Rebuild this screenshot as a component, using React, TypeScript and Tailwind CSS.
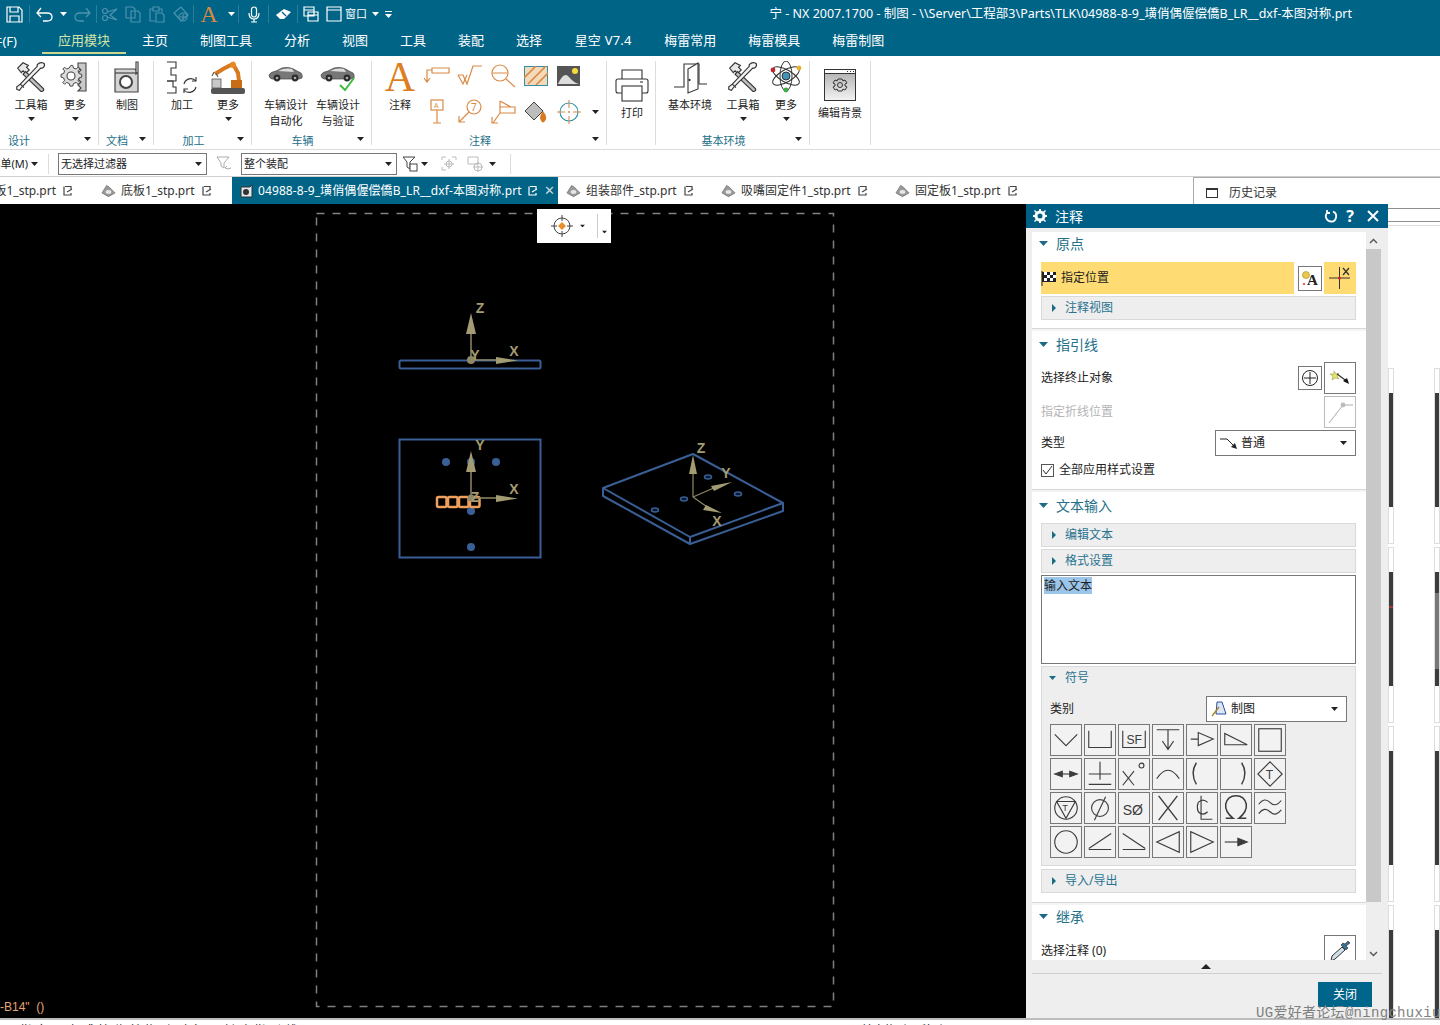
import React from "react";

const Caret = ({ className = "" }: { className?: string }) => (
  <svg width="7" height="4" viewBox="0 0 7 4" className={`shrink-0 ${className}`}>
    <path d="M0 0H7L3.5 4Z" fill="currentColor" />
  </svg>
);

/* ---------- ribbon drawings ---------- */
const ToolsIcon = ({ size = 32 }: { size?: number }) => (
  <svg width={size} height={size} viewBox="0 0 36 36" fill="none" stroke="#333" strokeWidth="1.3">
    <path d="M3 8 9 2l6 3-2 2 3 3-4 4-3-3-2 2Z" fill="#e8e8e8" />
    <path d="m12 12 20 19q1 2-1 3t-3-1L9 15Z" fill="#bdbdbd" />
    <path d="M33 3q1 3-2 5l-2 0L8 29l-3 4-3-1 0-3 4-3L25 6l0-2q3-3 6-2Z" fill="#f2f2f2" />
    <path d="m6 26 4 4" />
  </svg>
);

const GearPanelIcon = () => (
  <svg width="30" height="32" viewBox="0 0 30 32" fill="none" stroke="#444" strokeWidth="1.1">
    <path d="M18 2h8v28h-8l3-3-3-3 3-3-3-3 3-3-3-3 3-3-3-3Z" fill="#c9c9c9" />
    <path
      d="M11 6l2 0 1 3 3 1 2-2 2 2-2 2 1 3 3 1v3l-3 1-1 3 2 2-2 2-2-2-3 1-1 3h-3l-1-3-3-1-2 2-2-2 2-2-1-3-3-1v-3l3-1 1-3-2-2 2-2 2 2 3-1Z"
      fill="#dcdcdc"
      transform="translate(1 -1) scale(.9)"
    />
    <circle cx="11" cy="15" r="4" fill="#fff" />
  </svg>
);

const DraftIcon = () => (
  <svg width="30" height="34" viewBox="0 0 30 34" fill="none" stroke="#444" strokeWidth="1.2">
    <path d="M3 8h20l3 4v19H3Z" fill="#d4d4d4" />
    <circle cx="14" cy="21" r="6" fill="#fff" strokeWidth="2" />
    <path d="M3 12h22" />
    <path d="M24 1l2 0 0 10-2 2Z" fill="#fff" />
  </svg>
);

const MachiningIcon = () => (
  <svg width="34" height="34" viewBox="0 0 34 34" fill="none" stroke="#333" strokeWidth="1.1">
    <path d="M2 1h9v6H6v7h5v6H2" />
    <path d="M2 20h6v6h3v6H2" />
    <path d="M19 23a7 7 0 0 1 12-3M31 26a7 7 0 0 1-12 3" />
    <path d="m31 16 0 4-4 0M19 32l0-4 4 0" />
  </svg>
);

const RobotIcon = () => (
  <svg width="34" height="34" viewBox="0 0 34 34">
    <rect x="1" y="18" width="9" height="9" fill="#c8c8c8" stroke="#555" strokeWidth=".8" />
    <rect x="0" y="27" width="34" height="6" rx="2" fill="#555" />
    <path d="M4 13 12 8l10-5 5 9 1 8" fill="none" stroke="#d97a1e" strokeWidth="4" />
    <rect x="20" y="19" width="11" height="8" fill="#c96d14" />
    <circle cx="22" cy="4" r="3" fill="#e88a22" />
    <path d="M3 11 1 15M5 12l2 4" stroke="#666" strokeWidth="1.2" />
  </svg>
);

const CarIcon = ({ check = false }: { check?: boolean }) => (
  <svg width="36" height="32" viewBox="0 0 36 32" className="mt-[2px]">
    <path d="M1 12q1-3 7-4l6-3q8-2 15 3l4 2q2 2 1 5l-3 1H4q-3-1-3-4Z" fill="#777" stroke="#444" strokeWidth=".7" />
    <path d="M10 8l5-2q5-1 9 0l2 3Z" fill="#ddd" />
    <circle cx="9" cy="15" r="3.4" fill="#2c2c2c" />
    <circle cx="27" cy="15" r="3.4" fill="#2c2c2c" />
    <circle cx="9" cy="15" r="1.3" fill="#aaa" />
    <circle cx="27" cy="15" r="1.3" fill="#aaa" />
    {check && <path d="m20 22 5 5 9-12" fill="none" stroke="#3fbb3f" strokeWidth="2" />}
  </svg>
);

const Orange = ({ children, w = 30 }: { children: React.ReactNode; w?: number }) => (
  <svg width={w} height="26" viewBox={`0 0 ${w} 26`} fill="none" stroke="#d98a45" strokeWidth="1.2">
    {children}
  </svg>
);

const PrinterIcon = () => (
  <svg width="34" height="34" viewBox="0 0 34 34" fill="none" stroke="#333" strokeWidth="1.1">
    <path d="M7 11V2h20v9" />
    <path d="M7 25H3q-2 0-2-2V13q0-2 2-2h28q2 0 2 2v10q0 2-2 2h-4" />
    <rect x="7" y="18" width="20" height="15" fill="#fff" />
    <path d="M25 14h3" />
  </svg>
);

const DoorIcon = () => (
  <svg width="34" height="34" viewBox="0 0 34 34" fill="none" stroke="#333" strokeWidth="1.1">
    <path d="M1 26h10V3h15v20h8" />
    <path d="M15 32V8L25 2v26Z" fill="#fff" />
    <circle cx="16.5" cy="19" r=".6" fill="#333" />
  </svg>
);

const AtomIcon = () => (
  <svg width="32" height="32" viewBox="0 0 32 32" fill="none" stroke="#333" strokeWidth="1">
    <ellipse cx="16" cy="15" rx="15" ry="6" transform="rotate(30 16 15)" />
    <ellipse cx="16" cy="15" rx="15" ry="6" transform="rotate(-30 16 15)" />
    <ellipse cx="16" cy="15" rx="6" ry="15" />
    <circle cx="16" cy="15" r="4" fill="#3d93b8" />
    <circle cx="3" cy="9" r="2.4" fill="#c0272d" stroke="none" />
    <circle cx="29" cy="7" r="2.4" fill="#eab12e" stroke="none" />
    <circle cx="16" cy="29" r="2.4" fill="#3fae49" stroke="none" />
  </svg>
);

const BackgroundIcon = () => (
  <svg width="34" height="34" viewBox="0 0 34 34" fill="none" stroke="#333" strokeWidth="1">
    <defs>
      <linearGradient id="bgfill" x1="0" y1="0" x2="0" y2="1">
        <stop offset="0" stopColor="#b5b5b5" />
        <stop offset="1" stopColor="#f4f4f4" />
      </linearGradient>
    </defs>
    <rect x="1.5" y="1.5" width="31" height="31" fill="#fff" />
    <rect x="1.5" y="5.5" width="31" height="27" fill="url(#bgfill)" />
    <path d="M24 3.5h1M27 3.5h1M30 3.5h1" />
    <path d="M15 11h4l1 2 2-1 2 3-2 1v2l2 1-2 3-2-1-1 2h-4l-1-2-2 1-2-3 2-1v-2l-2-1 2-3 2 1Z" />
    <circle cx="17" cy="17" r="2.5" />
  </svg>
);

/* ---------- ribbon parts ---------- */
const Tool = ({
  icon,
  label,
  label2,
  drop,
  w,
  low,
}: {
  icon: React.ReactNode;
  label: string;
  label2?: string;
  drop?: boolean;
  w: number;
  low?: boolean;
}) => (
  <div className="flex flex-col items-center shrink-0" style={{ width: w }}>
    <div className={`flex items-start justify-center ${low ? "h-[44px] pt-[7px]" : "h-[36px]"}`}>{icon}</div>
    <span className="text-[11px] leading-[16px] text-[#222] whitespace-nowrap">{label}</span>
    {label2 && <span className="text-[11px] leading-[16px] text-[#222] whitespace-nowrap">{label2}</span>}
    {drop && <Caret className="mt-[4px] text-[#222]" />}
  </div>
);

const Group = ({
  w,
  label,
  more,
  labelClass = "mr-[11px]",
  children,
}: {
  w: number;
  label?: string;
  more?: boolean;
  labelClass?: string;
  children: React.ReactNode;
}) => (
  <div className="shrink-0 h-[84px] mt-[5px] border-r border-[#dcdcdc] flex flex-col" style={{ width: w }}>
    <div className="flex h-[71px]">{children}</div>
    <div className="mt-auto h-[13px] grid grid-cols-[1fr_auto_1fr] items-center pr-[7px]">
      <span />
      <span className={`text-[11px] leading-[13px] text-[#1c6f88] translate-y-[2px] ${labelClass}`}>{label}</span>
      {more ? <Caret className="justify-self-end text-[#222]" /> : <span />}
    </div>
  </div>
);

/* ---------- dialog parts ---------- */
const SectionHead = ({ label, h = "h-[28px]" }: { label: string; h?: string }) => (
  <div className={`flex items-center gap-[8px] pl-[7px] pb-[2px] ${h}`}>
    <svg width="9" height="5" viewBox="0 0 9 5">
      <path d="M0 0H9L4.5 5Z" fill="#1b6a86" />
    </svg>
    <span className="text-[14px] text-[#24708a]">{label}</span>
  </div>
);

const Fold = ({ label, className = "" }: { label: string; className?: string }) => (
  <div
    className={`h-[24px] ml-[9px] mr-[10px] bg-[#eeeeee] border border-[#d9d9d9] flex items-center pl-[10px] gap-[9px] ${className}`}
  >
    <svg width="4" height="8" viewBox="0 0 4 8">
      <path d="M0 0V8L4 4Z" fill="#1b6a86" />
    </svg>
    <span className="text-[12px] text-[#2a7390]">{label}</span>
  </div>
);

const Divider = ({ className = "" }: { className?: string }) => (
  <div className={`h-[3px] border-t border-[#d8d8d8] bg-[#f4f4f4] ${className}`} />
);

const sym = "#3c3c3c";
const symbols: React.ReactNode[] = [
  <path d="M4 10 16 22 28 10" />,
  <path d="M4 6V24H28V6" />,
  <>
    <path d="M4 6V24H28V6" />
    <text x="8" y="20" fontSize="13" fill={sym} stroke="none" fontFamily="Liberation Sans">SF</text>
  </>,
  <path d="M4 5H28M16 5V26M10 17 16 26 22 17" />,
  <path d="M4 15H12M12 8V22L28 15Z" />,
  <path d="M4 9V21H28Z" />,
  <rect x="4" y="4" width="24" height="24" />,
  <>
    <path d="M12 16H20" />
    <path d="M4 16 12 13V19ZM28 16 20 13V19Z" fill={sym} />
  </>,
  <path d="M16 3V22M4 16H28M4 27H28" />,
  <>
    <path d="M4 13 16 28M16 13 4 28" />
    <circle cx="24" cy="7" r="2.6" />
  </>,
  <path d="M4 21Q16 3 28 21" />,
  <path d="M10 4Q3 15 10 27" strokeWidth="1.5" />,
  <path d="M22 4Q29 15 22 27" strokeWidth="1.5" />,
  <>
    <path d="M16 3 29 16 16 29 3 16Z" />
    <text x="11.500" y="21" fontSize="13" fill={sym} stroke="none" fontFamily="Liberation Sans">T</text>
  </>,
  <>
    <circle cx="16" cy="16" r="12" />
    <path d="M6 9H26L16 27Z" />
    <text x="12" y="19" fontSize="10" fill={sym} stroke="none" fontFamily="Liberation Sans">T</text>
  </>,
  <>
    <circle cx="16" cy="16" r="9" />
    <path d="M22 4 10 29" />
  </>,
  <text x="4" y="23" fontSize="15" fill={sym} stroke="none" fontFamily="Liberation Sans">SØ</text>,
  <path d="M6 3 26 29M26 3 6 29" strokeWidth="1.5" />,
  <>
    <path d="M22 10Q17 5 12 10 10 15 12 20 17 25 22 20" />
    <path d="M15 3V28H27" />
  </>,
  <path d="M5 27H13Q4 20 5 12 7 3 16 3 25 3 27 12 28 20 19 27H27" strokeWidth="1.6" />,
  <path d="M4 12Q10 4 16 10T28 8M4 22Q10 14 16 20T28 18" />,
  <circle cx="16" cy="16" r="12" />,
  <path d="M4 23 28 7M4 24H28" />,
  <path d="M4 7 28 23M4 24H28" />,
  <path d="M28 5V27L4 16Z" />,
  <path d="M4 5V27L28 16Z" />,
  <>
    <path d="M4 16H18" />
    <path d="M18 12 28 16 18 20Z" fill={sym} />
  </>,
];

const PlainBtn = ({ children, className = "" }: { children: React.ReactNode; className?: string }) => (
  <div className={`shrink-0 flex items-center justify-center border border-[#777] bg-white ${className}`}>{children}</div>
);

const NoteIcon = ({ dark = false }: { dark?: boolean }) => (
  <svg width="10" height="11" viewBox="0 0 10 11" fill="none" stroke={dark ? "#fff" : "#444"} strokeWidth="1.2" className="shrink-0">
    <path d="M2 1.500H8V4M8 8V10H1V1.500" />
    <path d="M4 7 9 4" />
  </svg>
);

const PartIcon = () => (
  <svg width="15" height="14" viewBox="0 0 16 14" className="shrink-0">
    <path d="M1 9 6 1 9 3 15 9 8 13Z" fill="#9a9a9a" stroke="#666" strokeWidth=".7" />
    <ellipse cx="8" cy="8" rx="3" ry="2" fill="#e8e8e8" />
  </svg>
);

const Tab = ({ label, className = "" }: { label: string; className?: string }) => (
  <div className={`flex items-center shrink-0 text-[12px] text-[#333] whitespace-nowrap ${className}`}>
    <PartIcon />
    <span className="ml-[5px] mr-[7px] shrink-0">{label}</span>
    <NoteIcon />
  </div>
);

const QuickSep = () => <div className="w-px h-[18px] bg-[#2d7d9b] shrink-0" />;

const Q = ({ w, children }: { w: number; children?: React.ReactNode }) => (
  <div className="flex items-center justify-center shrink-0 h-full text-white" style={{ width: w }}>
    {children}
  </div>
);

const faded = "#4d92ad";

const ThumbCard = ({ children }: { children?: React.ReactNode }) => (
  <div className="h-[176px] border border-[#dddddd] pt-[24px]">
    <div className="h-[114px] bg-[#3c3c3c] overflow-hidden">{children}</div>
  </div>
);

const AxisLabel = ({ x, y, t }: { x: number; y: number; t: string }) => (
  <text x={x} y={y} fontSize="14" fontWeight="bold" fill="#a39b72" fontFamily="Liberation Sans" textAnchor="middle">
    {t}
  </text>
);

const cone = "#a39b72";

export default function App() {
  return (
    <div className="w-[1440px] h-[1025px] overflow-hidden relative flex flex-col bg-white font-['Noto_Sans','Noto_Sans_CJK_SC',sans-serif]">
      {/* Title bar */}
      <div className="h-[28px] bg-[#006487] flex items-center text-white shrink-0">
        <Q w={29}>
          <svg width="17" height="17" viewBox="0 0 17 17" fill="none" stroke="#fff" strokeWidth="1.2">
            <path d="M1 1H13L16 4V16H1Z" />
            <path d="M4 1V6H12V1M4 16V10H13V16" />
          </svg>
        </Q>
        <QuickSep />
        <Q w={28}>
          <svg width="17" height="15" viewBox="0 0 17 15" fill="none" stroke="#fff" strokeWidth="1.3">
            <path d="M1 6H11Q16 6 16 10T11 14H7M5 1 1 6 5 10" />
          </svg>
        </Q>
        <Q w={10}><Caret /></Q>
        <Q w={28}>
          <svg width="17" height="15" viewBox="0 0 17 15" fill="none" stroke={faded} strokeWidth="1.3">
            <path d="M16 6H6Q1 6 1 10T6 14H10M12 1 16 6 12 10" />
          </svg>
        </Q>
        <QuickSep />
        <Q w={24}>
          <svg width="17" height="15" viewBox="0 0 17 15" fill="none" stroke={faded} strokeWidth="1.2">
            <circle cx="4" cy="4" r="2.500" />
            <circle cx="4" cy="11" r="2.500" />
            <path d="M6 5 16 2 9 8 16 13 6 10" />
          </svg>
        </Q>
        <Q w={24}>
          <svg width="16" height="17" viewBox="0 0 16 17" fill="none" stroke={faded} strokeWidth="1.2">
            <path d="M1 1H8L10 3V12H1Z" />
            <path d="M6 5H13L15 7V16H6Z" />
          </svg>
        </Q>
        <Q w={24}>
          <svg width="16" height="17" viewBox="0 0 16 17" fill="none" stroke={faded} strokeWidth="1.2">
            <path d="M4 3H1V15H6M10 3H13V6M4 1H10V5H4ZM7 7H13L15 9V16H7Z" />
          </svg>
        </Q>
        <Q w={24}>
          <svg width="17" height="17" viewBox="0 0 17 17" fill="none" stroke={faded} strokeWidth="1.2">
            <path d="M8 1 1 7 8 15 15 9Z" />
            <circle cx="10" cy="11" r="4" />
            <path d="M10 8V14M7 11H13" />
          </svg>
        </Q>
        <QuickSep />
        <Q w={30}>
          <span className="text-[24px] leading-none font-['Liberation_Serif',serif] text-[#d98a3d]">A</span>
        </Q>
        <Q w={14}><Caret /></Q>
        <QuickSep />
        <Q w={29}>
          <svg width="12" height="17" viewBox="0 0 12 17" fill="none" stroke="#fff" strokeWidth="1.2">
            <rect x="3.500" y="1" width="5" height="10" rx="2.500" />
            <path d="M1 7Q1 13 6 13T11 7M6 13V16M3 16H9" />
          </svg>
        </Q>
        <QuickSep />
        <Q w={28}>
          <svg width="17" height="12" viewBox="0 0 17 12" fill="#fff">
            <path d="M1 7 9 1 16 4 9 11 5 11Z" />
            <path d="M7 4 11 8" stroke="#006487" strokeWidth="1.2" />
          </svg>
        </Q>
        <QuickSep />
        <Q w={26}>
          <svg width="16" height="16" viewBox="0 0 16 16" fill="none" stroke="#fff" strokeWidth="1.2">
            <path d="M1 1H11V10H1ZM1 4H11M5 6H15V15H5ZM5 9H15" />
          </svg>
        </Q>
        <Q w={20}>
          <svg width="16" height="16" viewBox="0 0 16 16" fill="none" stroke="#fff" strokeWidth="1.2">
            <path d="M1 1H15V15H1ZM1 4H15" />
          </svg>
        </Q>
        <Q w={24}><span className="text-[11px]">窗口</span></Q>
        <Q w={14}><Caret /></Q>
        <Q w={12}>
          <svg width="7" height="7" viewBox="0 0 7 7" fill="#fff">
            <path d="M0 0H7V1H0ZM0 3H7L3.500 7Z" />
          </svg>
        </Q>
        <div className="flex-1 text-right pr-[88px] text-[12.5px] whitespace-nowrap overflow-hidden">
          宁 - NX 2007.1700 - 制图 - \\Server\工程部3\Parts\TLK\04988-8-9_墴俏偶偓偿僑B_LR__dxf-本图对称.prt
        </div>
      </div>

      {/* Menu tabs */}
      <div className="h-[28px] bg-[#006487] flex text-[13px] text-white shrink-0">
        <div className="w-[17px] mr-[25px] flex justify-end items-center overflow-hidden whitespace-nowrap">件(F)</div>
        <div className="px-[16px] pt-[2px] flex items-center text-[#d4e3a6] border-b-2 border-[#cbd68e] h-[26px]">应用模块</div>
        {["主页", "制图工具", "分析", "视图", "工具", "装配", "选择"].map((m) => (
          <div key={m} className="px-[16px] flex items-center h-[26px] whitespace-nowrap">
            {m}
          </div>
        ))}
        <div className="w-[90px] flex justify-center items-center h-[26px] whitespace-nowrap tracking-[0.2px]">星空 V7.4</div>
        {["梅雷常用", "梅雷模具", "梅雷制图"].map((m) => (
          <div key={m} className="px-[16px] flex items-center h-[26px] whitespace-nowrap">
            {m}
          </div>
        ))}
      </div>

      {/* Ribbon */}
      <div className="h-[94px] shrink-0 border-b border-[#dcdcdc] flex">
        <Group w={99} label="设计" more labelClass="mr-[53px]">
          <Tool w={62} icon={<ToolsIcon />} label="工具箱" drop />
          <Tool w={26} icon={<GearPanelIcon />} label="更多" drop />
        </Group>
        <Group w={55} label="文档" more>
          <div className="pl-[11px] flex">
            <Tool w={34} icon={<DraftIcon />} label="制图" />
          </div>
        </Group>
        <Group w={98} label="加工" more>
          <div className="pl-[11px] flex gap-[12px]">
            <Tool w={34} icon={<MachiningIcon />} label="加工" />
            <Tool w={34} icon={<RobotIcon />} label="更多" drop />
          </div>
        </Group>
        <Group w={120} label="车辆" more>
          <div className="pl-[12px] flex gap-[8px]">
            <Tool w={44} icon={<CarIcon />} label="车辆设计" label2="自动化" />
            <Tool w={44} icon={<CarIcon check />} label="车辆设计" label2="与验证" />
          </div>
        </Group>
        <Group w={235} label="注释" more>
          <div className="pl-[11px] flex">
            <Tool
              w={34}
              icon={
                <svg width="32" height="32" viewBox="0 0 32 32">
                  <text x="16" y="30" fontSize="42" textAnchor="middle" fill="#dd7e1f" fontFamily="Liberation Serif">A</text>
                </svg>
              }
              label="注释"
            />
            <div className="ml-[3px] -mt-[3px] h-[72px] grid grid-cols-[33px_33px_33px_33px_33px_20px] grid-rows-[36px_36px] items-center justify-items-center">
              <Orange>
                <path d="M10 5H27V10H10ZM10 7H5V19M2 15 5 19 8 15" />
              </Orange>
              <Orange>
                <path d="M3 12H8L12 21 18 3H27" />
                <path d="M3 12 8 21 12 12" />
              </Orange>
              <Orange>
                <circle cx="12" cy="10" r="8" />
                <path d="M5 10H19M18 16 27 24" />
              </Orange>
              <svg width="24" height="20" viewBox="0 0 24 20">
                <rect x=".5" y=".5" width="23" height="19" fill="#f5d9b8" stroke="#2f8fa8" />
                <path d="M0 12 12 0M4 18 22 0M12 19 24 7" stroke="#d98a45" strokeWidth="1.6" />
              </svg>
              <svg width="23" height="20" viewBox="0 0 23 20">
                <rect width="23" height="20" fill="#555" />
                <path d="M1 18Q7 5 12 11T22 18Z" fill="#ddd" />
                <circle cx="18" cy="5" r="3" fill="#f4dc3a" />
              </svg>
              <span />
              <Orange w={20}>
                <rect x="4" y="1" width="12" height="10" />
                <path d="M10 11V24M6 24H14" />
                <text x="7" y="9" fontSize="7" stroke="none" fill="#d98a45">A</text>
              </Orange>
              <Orange>
                <circle cx="19" cy="8" r="7" />
                <text x="16" y="12" fontSize="10" stroke="none" fill="#d98a45">7</text>
                <path d="M14 13 4 23M4 17V23H10" />
              </Orange>
              <Orange>
                <path d="M12 2V14M12 2 23 8 12 8M12 8H27V14H12ZM12 14 5 24M4 18 4 24 10 24" />
              </Orange>
              <svg width="26" height="24" viewBox="0 0 26 24">
                <path d="M2 11 11 2 20 11 11 20Z" fill="#bdbdbd" stroke="#444" />
                <path d="M20 11Q25 17 22 21T17 18Q17 15 20 11Z" fill="#d97a1e" />
              </svg>
              <svg width="24" height="24" viewBox="0 0 24 24" fill="none" stroke="#2f8fa8" strokeWidth="1.1">
                <circle cx="12" cy="12" r="9" />
                <path d="M12 0V8M12 16V24M0 12H8M16 12H24" stroke="#d98a45" />
                <circle cx="12" cy="12" r="1" fill="#d98a45" stroke="none" />
              </svg>
              <Caret className="text-[#222]" />
            </div>
          </div>
        </Group>
        <Group w={49}>
          <div className="pl-[8px]">
            <Tool w={34} low icon={<PrinterIcon />} label="打印" />
          </div>
        </Group>
        <Group w={154} label="基本环境" more>
          <div className="pl-[12px] flex">
            <Tool w={44} icon={<DoorIcon />} label="基本环境" />
            <div className="ml-[15px]">
              <Tool w={32} icon={<ToolsIcon />} label="工具箱" drop />
            </div>
            <div className="ml-[10px]">
              <Tool w={34} icon={<AtomIcon />} label="更多" drop />
            </div>
          </div>
        </Group>
        <Group w={61}>
          <Tool w={60} low icon={<BackgroundIcon />} label="编辑背景" />
        </Group>
      </div>

      {/* Selection bar */}
      <div className="h-[27px] shrink-0 border-b border-[#cfcfcf] pt-[2px] flex items-center text-[11px] text-[#222]">
        <div className="w-[28px] flex justify-end overflow-hidden whitespace-nowrap">菜单(M)</div>
        <Caret className="ml-[3px] text-[#222]" />
        <div className="w-px h-[20px] bg-[#dcdcdc] ml-[10px]" />
        <div className="ml-[9px] w-[149px] h-[22px] border border-[#777] flex items-center justify-between pl-[2px] pr-[4px]">
          无选择过滤器
          <Caret className="text-[#222]" />
        </div>
        <div className="w-[34px] flex justify-center">
          <svg width="16" height="16" viewBox="0 0 16 16" fill="none" stroke="#aaa" strokeWidth="1">
            <path d="M1 1H13L8 7V12L5 10V7ZM9 12Q12 14 15 12M9 12 11 10" />
          </svg>
        </div>
        <div className="w-[156px] h-[22px] border border-[#777] flex items-center justify-between pl-[2px] pr-[4px]">
          整个装配
          <Caret className="text-[#222]" />
        </div>
        <div className="w-[32px] ml-[2px] flex items-center justify-center gap-[3px]">
          <svg width="16" height="16" viewBox="0 0 16 16" fill="none" stroke="#444" strokeWidth="1">
            <path d="M1 1H13L8 6V13L5 11V6Z" />
            <rect x="8" y="8" width="7" height="7" fill="#fff" />
          </svg>
          <Caret className="text-[#222]" />
        </div>
        <div className="w-[24px] ml-[6px] flex justify-center">
          <svg width="16" height="16" viewBox="0 0 16 16" fill="none" stroke="#bbb">
            <path d="M1 4V1H5M11 1H15V4M1 11V14H5" />
            <circle cx="8" cy="8" r="3" />
            <path d="M8 3V13M3 8H13" />
          </svg>
        </div>
        <div className="w-[24px] ml-[2px] flex justify-center">
          <svg width="16" height="16" viewBox="0 0 16 16" fill="none" stroke="#bbb">
            <path d="M1 1H11V8H1Z" />
            <circle cx="11" cy="11" r="4" />
            <path d="M11 6V16M6 11H16" />
          </svg>
        </div>
        <Caret className="ml-[2px] text-[#222]" />
        <div className="w-px h-[20px] bg-[#dcdcdc] ml-[14px]" />
      </div>

      {/* File tabs */}
      <div className="h-[27px] shrink-0 flex">
        <Tab label="固定板1_stp.prt" className="w-[73px] justify-end" />
        <div className="w-[28px] shrink-0" />
        <Tab label="底板1_stp.prt" className="w-[110px]" />
        <div className="w-[21px] shrink-0" />
        <div className="w-[326px] shrink-0 bg-[#006487] flex items-center pl-[8px] text-[12px] text-white whitespace-nowrap">
          <svg width="13" height="14" viewBox="0 0 13 14" className="mr-[5px] shrink-0">
            <path d="M1 3H10L12 1V13H1Z" fill="#dfe8ec" stroke="#333" />
            <circle cx="6" cy="8" r="3" fill="#333" />
          </svg>
          <span className="tracking-[0.1px]">04988-8-9_墴俏偶偓偿僑B_LR__dxf-本图对称.prt</span>
          <span className="ml-[6px]"><NoteIcon dark /></span>
          <span className="ml-[6px] text-[#c9d7de] text-[13px] leading-none">✕</span>
        </div>
        <Tab label="组装部件_stp.prt" className="ml-[8px] w-[155px]" />
        <Tab label="吸嘴固定件1_stp.prt" className="w-[174px]" />
        <Tab label="固定板1_stp.prt" className="w-[298px]" />
        <div className="flex-1 border-l border-t border-[#aaaaaa] flex items-center pt-[3px] text-[12px] text-[#333]">
          <span className="w-[10px]" />
          <span className="ml-[2px] w-[12px] h-[10px] border border-[#333] border-t-2" />
          <span className="ml-[11px]">历史记录</span>
        </div>
      </div>

      {/* Work area */}
      <div className="flex-1 flex min-h-0">
        {/* Drawing canvas */}
        <div className="w-[1026px] shrink-0 bg-black relative">
          <svg width="1026" height="814" viewBox="0 204 1026 814" className="block">
            <rect x="316.5" y="213.5" width="517" height="793" fill="none" stroke="#808080" strokeWidth="1.5" strokeDasharray="8 8" />

            {/* front view */}
            <rect x="399.5" y="360.5" width="141" height="8" rx="1.5" fill="none" stroke="#3a5f96" strokeWidth="2" />
            <path d="M471 360V330M471 360H498" stroke="#8f8866" strokeWidth="1.5" />
            <path d="M471 313 466 334H476ZM518 360.5 496 357V364Z" fill={cone} />
            <circle cx="471" cy="360" r="4" fill="#8f8866" />
            <AxisLabel x={480} y={313} t="Z" />
            <AxisLabel x={514} y={356} t="X" />
            <AxisLabel x={475} y={360} t="Y" />

            {/* top view */}
            <rect x="399.5" y="439.5" width="141" height="118" fill="none" stroke="#3a5f96" strokeWidth="2" />
            {[
              [446, 462],
              [471, 462],
              [496, 462],
              [471, 511],
              [471, 547],
            ].map(([cx, cy]) => (
              <circle key={`${cx}-${cy}`} cx={cx} cy={cy} r="4" fill="#3a5f96" />
            ))}
            {[437, 448, 459, 470].map((x) => (
              <rect key={x} x={x} y="497" width="9.5" height="10" rx="1.5" fill="none" stroke="#ee9f5d" strokeWidth="2.5" />
            ))}
            <path d="M471 498V470M471 498H498" stroke="#8f8866" strokeWidth="1.5" />
            <path d="M471 451 466 472H476ZM518 498.5 496 495V502Z" fill={cone} />
            <circle cx="471" cy="498" r="3.5" fill="#8f8866" />
            <AxisLabel x={480} y={450} t="Y" />
            <AxisLabel x={514} y={494} t="X" />
            <AxisLabel x={475} y={502} t="Z" />

            {/* iso view */}
            <path
              d="M603 488 693 454 783 503 690 537ZM603 488V496L690 544 783 511V503M690 537V544"
              fill="none"
              stroke="#3a5f96"
              strokeWidth="2"
              strokeLinejoin="round"
            />
            {[
              [655, 510],
              [684, 499],
              [708, 477],
              [738, 494],
            ].map(([cx, cy]) => (
              <ellipse key={cx} cx={cx} cy={cy} rx="3.5" ry="2" fill="#0a1a33" stroke="#3a5f96" strokeWidth="1.5" />
            ))}
            <path d="M693 497V474M693 497 716 487M693 497 710 509" stroke="#8f8866" strokeWidth="1.2" />
            <path d="M693 455 689 474H697ZM732 482 711 486 714 491ZM722 513 706 505 703 510Z" fill={cone} />
            <AxisLabel x={701} y={453} t="Z" />
            <AxisLabel x={726} y={478} t="Y" />
            <AxisLabel x={717} y={526} t="X" />

            <text x="0" y="1011" fontSize="12" fill="#e6a574" fontFamily="Liberation Sans" xmlSpace="preserve">-B14"  ()</text>
          </svg>

          {/* Floating snap toolbar */}
          <div className="absolute left-[537px] top-[5px] w-[74px] h-[34px] bg-white flex items-center text-[#222]">
            <svg width="24" height="24" viewBox="0 0 24 24" fill="none" stroke="#444" className="ml-[13px]">
              <circle cx="12" cy="12" r="8" />
              <path d="M12 1V7M12 17V23M1 12H7M17 12H23" />
              <path d="M12 8 16 12 12 16 8 12Z" fill="#e98f2e" stroke="none" />
            </svg>
            <Caret className="ml-[5px] scale-75" />
            <div className="w-px h-[24px] bg-[#cccccc] ml-[11px]" />
            <Caret className="ml-[3px] mt-[12px] scale-75" />
          </div>
        </div>

        {/* Note dialog */}
        <div className="w-[362px] shrink-0 bg-[#eeeeee] flex flex-col">
          <div className="h-[24px] bg-[#005f87] flex items-center pl-[7px] pr-[9px] text-white">
            <svg width="14" height="14" viewBox="0 0 14 14">
              <circle cx="7" cy="7" r="4" fill="none" stroke="#fff" strokeWidth="3" />
              <path d="M6 0H8V3H6ZM6 11H8V14H6ZM0 6H3V8H0ZM11 6H14V8H11ZM2 1 4 3 3 4 1 2ZM12 1 13 2 11 4 10 3ZM2 13 1 12 3 10 4 11ZM12 13 10 11 11 10 13 12Z" fill="#fff" />
            </svg>
            <span className="ml-[8px] text-[14px]">注释</span>
            <svg width="14" height="14" viewBox="0 0 14 14" fill="none" stroke="#fff" strokeWidth="1.8" className="ml-auto">
              <path d="M4 3Q1 5 2 8.5T7 12.5 12 8.5 9 2.5M3 1V4H6" />
            </svg>
            <span className="ml-[8px] text-[16px] font-bold leading-none">?</span>
            <svg width="12" height="12" viewBox="0 0 12 12" stroke="#fff" strokeWidth="2" className="ml-[13px]">
              <path d="M1 1 11 11M11 1 1 11" />
            </svg>
          </div>

          <div className="h-[732px] flex pl-[6px] pt-[4px]">
            <div className="w-[334px] h-[728px] bg-white overflow-hidden text-[12px] text-[#222]">
              <SectionHead label="原点" h="h-[24px]" />
              <div className="mt-[6px] ml-[9px] flex h-[32px] items-center">
                <div className="w-[253px] h-full bg-[#ffdc73] flex items-center">
                  <svg width="15" height="16" viewBox="0 0 15 16">
                    <path d="M1 1V16" stroke="#222" />
                    <rect x="1" y="2" width="14" height="10" fill="#222" />
                    <path d="M3 2H6V5H3ZM9 2H12V5H9ZM6 5H9V8H6ZM12 5H15V8H12ZM3 8H6V11H3ZM9 8H12V11H9Z" fill="#fff" />
                  </svg>
                  <span className="ml-[5px]">指定位置</span>
                </div>
                <PlainBtn className="ml-[4px] w-[24px] h-[25px]">
                  <svg width="18" height="18" viewBox="0 0 18 18">
                    <circle cx="5" cy="6" r="3.500" fill="#e9c84e" stroke="#a58a20" strokeWidth=".6" />
                    <circle cx="3" cy="15" r="1" fill="#d22" />
                    <text x="6" y="16" fontSize="15" fontWeight="bold" fontFamily="Liberation Serif" fill="#222">A</text>
                  </svg>
                </PlainBtn>
                <div className="ml-[2px] w-[32px] h-full bg-[#ffdc73] flex items-center justify-center">
                  <svg width="24" height="24" viewBox="0 0 24 24" stroke="#333" fill="none">
                    <path d="M11.500 1V23M1 12H22" />
                    <circle cx="11.500" cy="12" r="1.500" fill="#d22" stroke="none" />
                    <path d="M15 2 21 9M21 2 15 9" strokeWidth="1.3" />
                  </svg>
                </div>
              </div>
              <Fold label="注释视图" className="mt-[2px]" />
              <Divider className="mt-[8px]" />

              <SectionHead label="指引线" />
              <div className="mt-[3px] ml-[9px] flex h-[32px] items-center">
                <span className="w-[257px]">选择终止对象</span>
                <PlainBtn className="w-[24px] h-[24px]">
                  <svg width="18" height="18" viewBox="0 0 18 18" fill="none" stroke="#222">
                    <circle cx="9" cy="9" r="7.500" />
                    <path d="M9 3V15M3 9H15" />
                  </svg>
                </PlainBtn>
                <PlainBtn className="ml-[2px] w-[32px] h-[32px]">
                  <svg width="22" height="16" viewBox="0 0 22 16">
                    <path d="M5 1 7 4 10 3 8 6 10 9 6 8 3 10 4 6 1 4 5 4Z" fill="#e8e36a" stroke="#9ba04a" strokeWidth=".6" />
                    <path d="M8 4 19 12" stroke="#333" strokeWidth="1.2" />
                    <path d="M20 14 14 11 18 8Z" fill="#111" />
                  </svg>
                </PlainBtn>
              </div>
              <div className="mt-[2px] ml-[9px] flex h-[32px] items-center">
                <span className="w-[283px] text-[#b4b4b4]">指定折线位置</span>
                <PlainBtn className="w-[32px] h-[32px] !border-[#bbbbbb]">
                  <svg width="26" height="26" viewBox="0 0 26 26" fill="none" stroke="#aaa">
                    <path d="M2 24 16 6H26" />
                    <circle cx="16" cy="6" r="2.400" fill="#bbb" stroke="none" />
                  </svg>
                </PlainBtn>
              </div>
              <div className="mt-[2px] ml-[9px] flex h-[26px] items-center">
                <span className="w-[174px]">类型</span>
                <div className="w-[141px] h-full border border-[#777] flex items-center pl-[4px] pr-[8px]">
                  <svg width="18" height="12" viewBox="0 0 18 12" fill="none" stroke="#222">
                    <path d="M0 2H7L15 10" />
                    <path d="M17 12 11 10 15 6Z" fill="#222" stroke="none" />
                  </svg>
                  <span className="ml-[3px]">普通</span>
                  <Caret className="ml-auto text-[#222]" />
                </div>
              </div>
              <div className="mt-[4px] ml-[9px] flex h-[20px] items-center">
                <span className="w-[13px] h-[13px] border border-[#555] flex items-center justify-center">
                  <svg width="11" height="11" viewBox="0 0 11 11" fill="none" stroke="#333">
                    <path d="M1 5 4 9 10 1" />
                  </svg>
                </span>
                <span className="ml-[5px]">全部应用样式设置</span>
              </div>
              <Divider className="mt-[9px]" />

              <SectionHead label="文本输入" />
              <Fold label="编辑文本" className="mt-[3px]" />
              <Fold label="格式设置" className="mt-[2px]" />
              <div className="mt-[2px] ml-[9px] mr-[10px] h-[89px] border border-[#777] pl-[2px] pt-[1px]">
                <span className="bg-[#9bc6ea] leading-[17px] inline-block">输入文本</span>
              </div>
              <div className="mt-[2px] ml-[9px] mr-[10px] h-[200px] bg-[#eeeeee] border border-[#d9d9d9]">
                <div className="h-[22px] flex items-center pl-[7px] gap-[9px]">
                  <svg width="7" height="4" viewBox="0 0 7 4">
                    <path d="M0 0H7L3.500 4Z" fill="#1b6a86" />
                  </svg>
                  <span className="text-[#2a7390]">符号</span>
                </div>
                <div className="mt-[7px] flex items-center h-[26px] pl-[8px]">
                  <span className="w-[156px]">类别</span>
                  <div className="w-[141px] h-full border border-[#777] bg-white flex items-center pl-[4px] pr-[8px]">
                    <svg width="16" height="16" viewBox="0 0 16 16" fill="none" stroke="#2e4f9e">
                      <path d="M6 1H11L15 13H5Z" fill="#dde6f6" />
                      <path d="M1 15 8 6" stroke="#a58a20" strokeWidth="1.4" />
                    </svg>
                    <span className="ml-[4px]">制图</span>
                    <Caret className="ml-auto text-[#222]" />
                  </div>
                </div>
                <div className="mt-[2px] ml-[8px] grid grid-cols-[repeat(7,32px)] auto-rows-[32px] gap-[2px]">
                  {symbols.map((s, i) => (
                    <div key={i} className="border border-[#777] bg-[#f2f2f2]">
                      <svg width="30" height="30" viewBox="0 0 32 32" fill="none" stroke={sym} strokeWidth="1.2">
                        {s}
                      </svg>
                    </div>
                  ))}
                </div>
              </div>
              <Fold label="导入/导出" className="mt-[3px]" />
              <Divider className="mt-[9px]" />

              <SectionHead label="继承" h="h-[25px]" />
              <div className="mt-[5px] ml-[9px] flex h-[32px] items-center">
                <span className="w-[283px]">选择注释 (0)</span>
                <PlainBtn className="w-[32px] h-[32px]">
                  <svg width="24" height="24" viewBox="0 0 24 24">
                    <path d="M3 22 4 17 14 8 17 11 7 20Z" fill="#cfe0ea" stroke="#333" />
                    <path d="M13 6 18 11 20 9 18 7 22 4 20 2 17 5 15 4Z" fill="#3a6f95" stroke="#222" strokeWidth=".6" />
                  </svg>
                </PlainBtn>
              </div>
            </div>

            {/* Scrollbar */}
            <div className="w-[15px] h-[728px] flex flex-col items-center text-[#555]">
              <div className="h-[17px] flex items-center">
                <svg width="9" height="6" viewBox="0 0 9 6" fill="none" stroke="currentColor" strokeWidth="1.4">
                  <path d="M1 5 4.500 1.500 8 5" />
                </svg>
              </div>
              <div className="w-full h-[653px] bg-[#c8c8c8]" />
              <div className="mt-[46px] h-[12px] flex items-center">
                <svg width="9" height="6" viewBox="0 0 9 6" fill="none" stroke="currentColor" strokeWidth="1.4">
                  <path d="M1 1 4.500 4.500 8 1" />
                </svg>
              </div>
            </div>
          </div>

          <div className="flex justify-start pl-[175px] h-[13px] items-center">
            <svg width="10" height="5" viewBox="0 0 10 5">
              <path d="M0 5H10L5 0Z" fill="#222" />
            </svg>
          </div>
          <div className="mx-[6px] border-t border-[#cfcfcf]" />
          <div className="flex justify-end pr-[16px] pt-[8px]">
            <div className="w-[54px] h-[25px] bg-[#00658a] text-white text-[12px] flex items-center justify-center">关闭</div>
          </div>
        </div>

        {/* Peek of the panel behind the dialog */}
        <div className="flex-1 min-w-0 overflow-hidden flex flex-col">
          <div className="h-[5px] border-b border-[#8e8e8e] shrink-0" />
          <div className="h-[13px] border-b border-[#8e8e8e] shrink-0" />
          <div className="h-[4px] border-b border-[#dddddd] shrink-0" />
          <div className="flex gap-[40px] mt-[142px]">
            <div className="w-[7px] flex flex-col gap-[3px]">
              <ThumbCard />
              <ThumbCard>
                <div className="mt-[34px] h-[2px] bg-[#a33a3a]" />
              </ThumbCard>
              <ThumbCard />
              <ThumbCard />
            </div>
            <div className="w-[7px] flex flex-col gap-[3px]">
              <ThumbCard />
              <ThumbCard>
                <div className="mt-[21px] h-[76px] bg-[#777777]" />
              </ThumbCard>
              <ThumbCard />
              <ThumbCard />
            </div>
          </div>
        </div>
      </div>

      {/* Cue line, cut by the window edge */}
      <div className="h-[7px] shrink-0 border-t-2 border-[#bdbdbd] bg-white overflow-hidden flex text-[12px] leading-[14px] text-[#222] whitespace-nowrap pt-[4px]">
        <span className="ml-[20px] tracking-[3.6px]">指定原点或按住并拖动对象以创建指引线</span>
        <span className="ml-[560px]">单击拖动以移动</span>
      </div>

      {/* Forum watermark */}
      <div className="absolute left-[1256px] top-[1005px] text-[14px] leading-[16px] whitespace-nowrap text-[#808080] font-['Liberation_Mono','Noto_Sans_CJK_SC',monospace] tracking-[0.3px]">
        UG爱好者论坛@ningchuxiu
      </div>
    </div>
  );
}
